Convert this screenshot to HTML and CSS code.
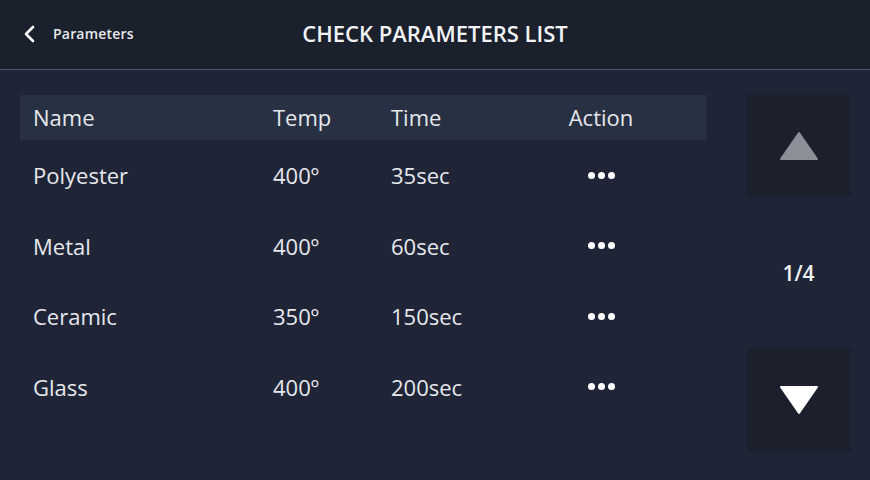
FILE: index.html
```html
<!DOCTYPE html>
<html>
<head>
<meta charset="utf-8">
<link rel="stylesheet" href="styles.css">
</head>
<body>
<div class="screen">
  <header class="topbar">
    <div class="back">
      <svg class="chev" width="14" height="18" viewBox="0 0 14 18"><path d="M10 2 L3 9 L10 16" fill="none" stroke="#ffffff" stroke-width="2.6" stroke-linecap="round" stroke-linejoin="round"/></svg>
      <span>Parameters</span>
    </div>
    <h1 class="title">CHECK PARAMETERS LIST</h1>
  </header>
  <main class="content">
    <section class="table">
      <div class="row head">
        <span class="c-name">Name</span><span class="c-temp">Temp</span><span class="c-time">Time</span><span class="c-act">Action</span>
      </div>
      <div class="row">
        <span class="c-name">Polyester</span><span class="c-temp">400º</span><span class="c-time">35sec</span><span class="c-act"><i class="dots"><b></b><b></b><b></b></i></span>
      </div>
      <div class="row">
        <span class="c-name">Metal</span><span class="c-temp">400º</span><span class="c-time">60sec</span><span class="c-act"><i class="dots"><b></b><b></b><b></b></i></span>
      </div>
      <div class="row">
        <span class="c-name">Ceramic</span><span class="c-temp">350º</span><span class="c-time">150sec</span><span class="c-act"><i class="dots"><b></b><b></b><b></b></i></span>
      </div>
      <div class="row">
        <span class="c-name">Glass</span><span class="c-temp">400º</span><span class="c-time">200sec</span><span class="c-act"><i class="dots"><b></b><b></b><b></b></i></span>
      </div>
    </section>
    <aside class="pager">
      <div class="pbtn">
        <svg width="42" height="32" viewBox="0 0 42 32"><path d="M21 3 L39 29 L3 29 Z" fill="#8b8f97" stroke="#8b8f97" stroke-width="2" stroke-linejoin="round"/></svg>
      </div>
      <div class="page">1/4</div>
      <div class="pbtn">
        <svg width="42" height="32" viewBox="0 0 42 32"><path d="M3 3 L39 3 L21 29 Z" fill="#ffffff" stroke="#ffffff" stroke-width="2" stroke-linejoin="round"/></svg>
      </div>
    </aside>
  </main>
</div>
</body>
</html>
```
FILE: styles.css
```css
* { box-sizing: border-box; margin: 0; padding: 0; }
html, body { width: 870px; height: 480px; overflow: hidden; }
body { background: #1f2537; font-family: "Open Sans", "Noto Sans", sans-serif; color: #eef0f3; }
.screen { width: 870px; height: 480px; display: flex; flex-direction: column; }
.topbar {
  height: 70px; background: #1b202d; border-bottom: 1px solid #4b5b6c;
  position: relative; display: flex; align-items: center; justify-content: center;
}
.back { position: absolute; left: 23px; top: 24px; display: flex; align-items: center; gap: 16px; }
.back span { font-size: 14px; font-weight: 600; letter-spacing: 0.2px; color: #e8eaee; }
.chev { display: block; }
.title { font-size: 22px; font-weight: 600; color: #f2f3f5; margin-top: -3px; }
.content { flex: 1; display: flex; padding: 25px 20px 0 20px; }
.table { width: 687px; display: flex; flex-direction: column; }
.row { display: flex; align-items: center; height: 70.5px; font-size: 22px; color: #e6e8ec; padding-left: 13px; padding-bottom: 2px; }
.row.head { height: 45px; background: #283044; margin-bottom: 1px; }
.c-name { width: 240px; }
.c-temp { width: 118px; }
.c-time { width: 160px; }
.c-act { width: 100px; display: flex; justify-content: center; }
.dots { display: flex; gap: 3px; }
.dots b { width: 7px; height: 7px; border-radius: 50%; background: #fff; display: block; }
.pager { margin-left: 41px; width: 101px; display: flex; flex-direction: column; align-items: center; }
.pbtn { width: 101px; height: 101px; background: #1b202c; display: flex; align-items: center; justify-content: center; box-shadow: 0 0 3px rgba(10,14,22,0.35); }
.page { height: 153px; display: flex; align-items: center; justify-content: center; font-size: 21px; font-weight: 600; color: #f0f1f3; padding-top: 1px; }
```
